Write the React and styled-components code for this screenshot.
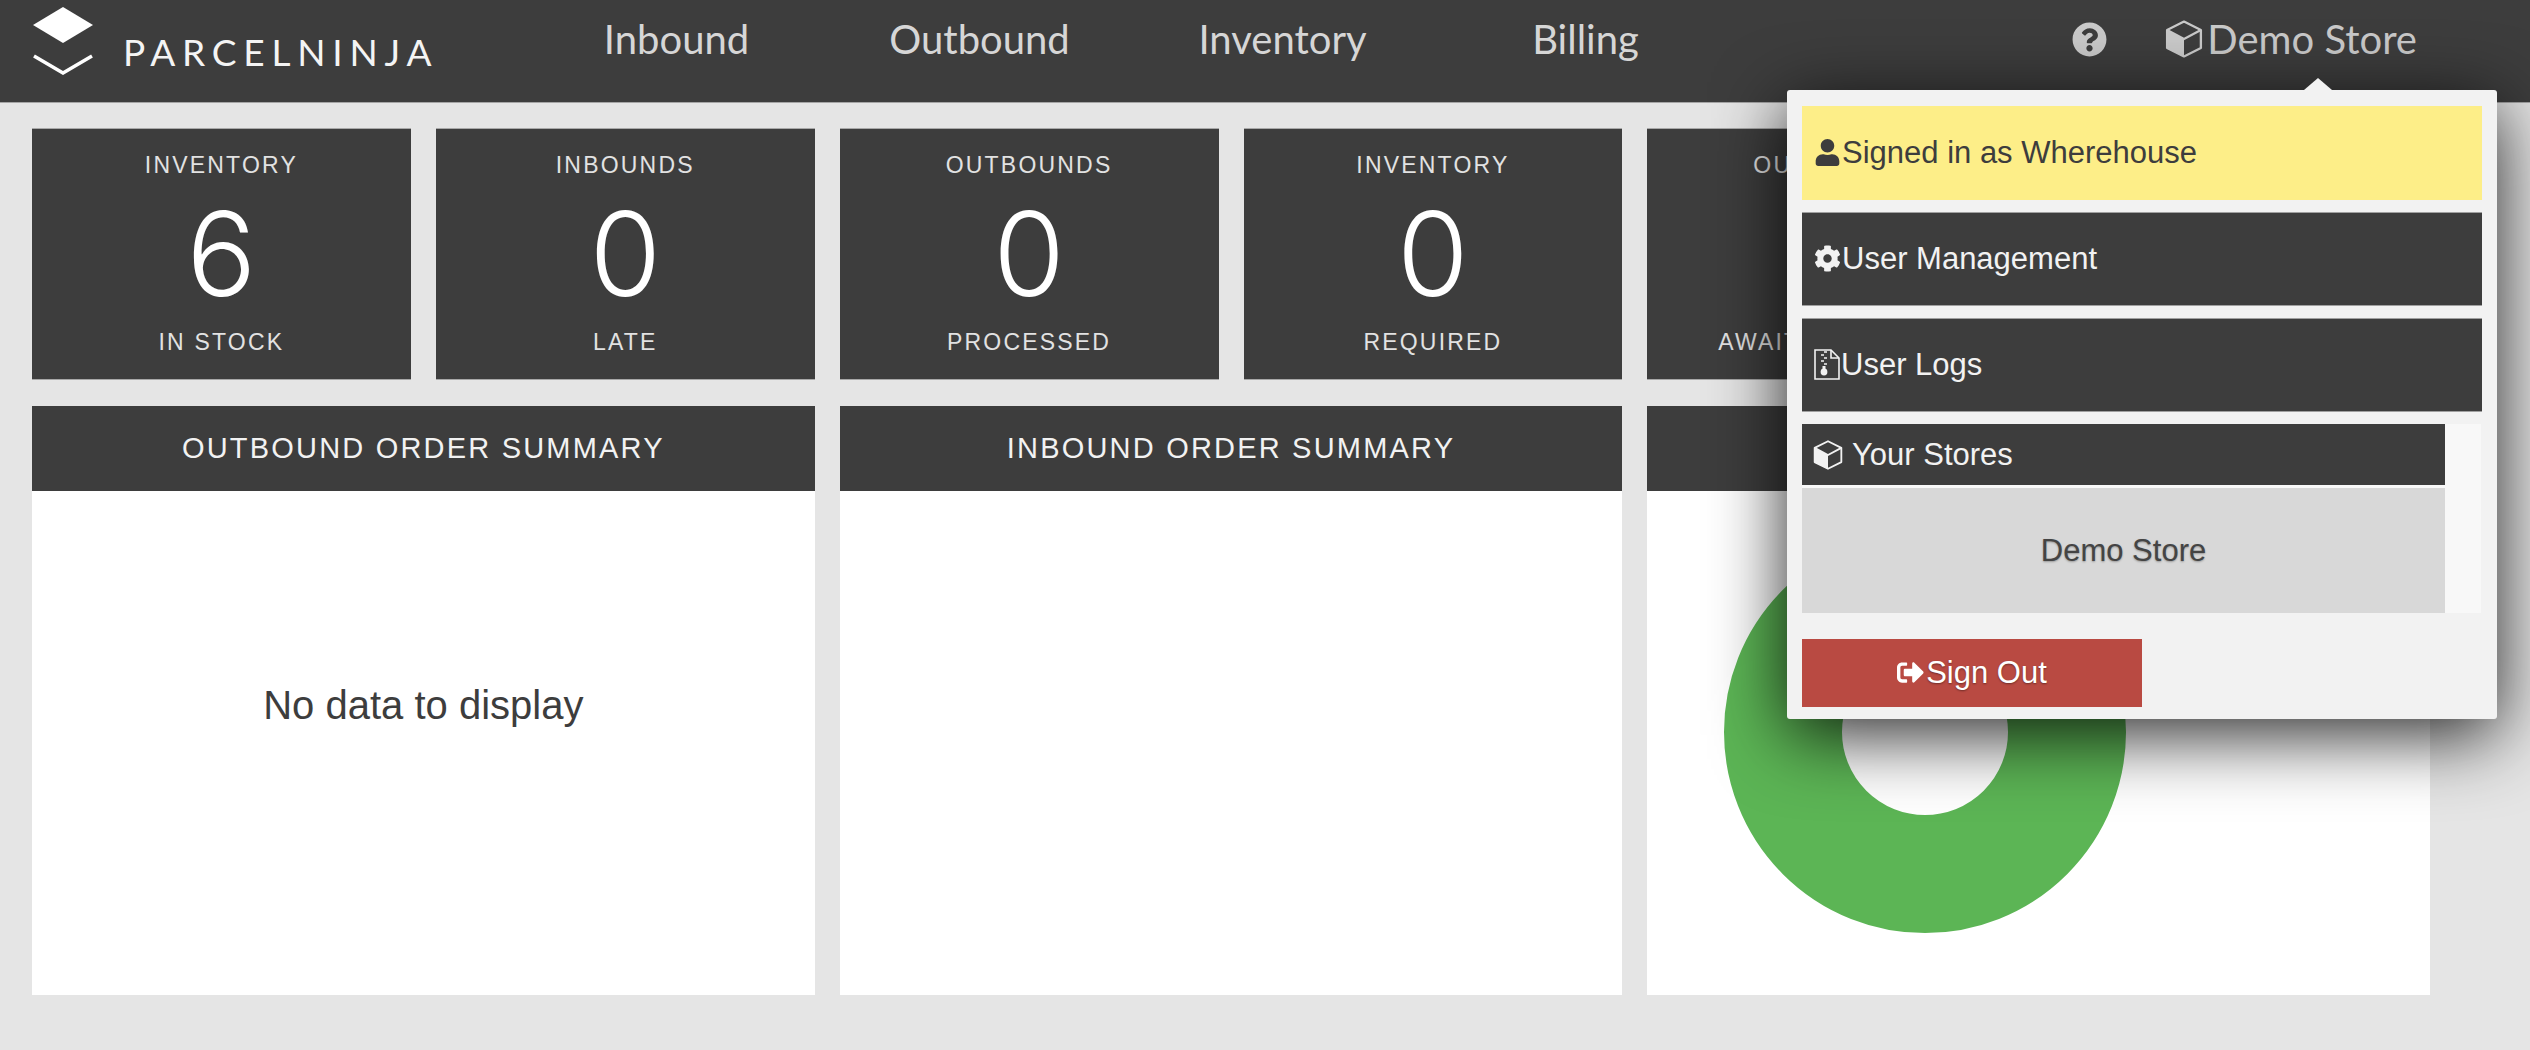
import React from 'react'
import styled, { createGlobalStyle } from 'styled-components'
import { FaUser, FaCog, FaSignOutAlt, FaQuestionCircle } from 'react-icons/fa'

const GlobalStyle = createGlobalStyle`
html, body {
    margin: 0;
    height: 100%;
    background-color: #e5e5e5;
    overflow: hidden;
    font-family: "Liberation Sans", Arial, sans-serif;
}
`;

const Page = styled.div`
position: relative;
width: 2530px;
height: 1050px;
`;

const Header = styled.header`
display: flex;
align-items: center;
height: 103px;
box-sizing: border-box;
background-color: #3d3d3d;
border-bottom: 1px solid #a5a5a5;
color: #d6d6d6;
font-family: "Lato", sans-serif;
`;

const Brand = styled.div`
display: flex;
align-items: center;
width: 525px;
padding-left: 33px;
box-sizing: border-box;
gap: 30px;
height: 100%;
padding-bottom: 20px;
`;

const LogoText = styled.span`
font-family: "Lato", sans-serif;
font-size: 37px;
line-height: 1;
letter-spacing: 6.8px;
color: #f4f4f4;
margin-top: 21px;
`;

const Nav = styled.nav`
display: flex;
flex: 1;
`;

const NavItem = styled.a`
width: 303px;
text-align: center;
font-size: 40px;
padding-bottom: 24px;
`;

const HeaderRight = styled.div`
display: flex;
align-items: center;
padding: 0 113px 24px 0;
font-size: 40px;
color: #cacaca;
svg { flex-shrink: 0; }
`;

const StoreLabel = styled.span`
display: flex;
align-items: center;
gap: 4px;
margin-left: 58px;
`;

const Board = styled.main`
display: grid;
grid-template-columns: repeat(6, 1fr);
grid-template-rows: 252px 589px;
gap: 26px 25px;
width: 2398px;
margin-left: 32px;
padding-top: 25px;
`;

const StatCard = styled.div`
display: flex;
flex-direction: column;
align-items: center;
justify-content: space-between;
padding: 23px 0 23px;
box-sizing: border-box;
background-color: #3d3d3d;
border: 1px solid #a8a8a8;
border-width: 1px 0;
color: #e2e2e2;
`;

const StatLabel = styled.div`
font-size: 23px;
line-height: 27px;
letter-spacing: 2.2px;
`;

const StatValue = styled.div`
font-family: "Inter", sans-serif;
font-weight: 300;
font-size: 116px;
line-height: 116px;
color: #fff;
`;

const Summary = styled.section`
grid-column: span 2;
display: flex;
flex-direction: column;
background-color: #fff;
`;

const SummaryTitle = styled.div`
height: 85px;
line-height: 85px;
flex-shrink: 0;
background-color: #3d3d3d;
color: #f2f2f2;
font-size: 29px;
letter-spacing: 2.2px;
text-align: center;
`;

const EmptyNote = styled.div`
flex: 1;
display: flex;
align-items: center;
justify-content: center;
padding-bottom: 76px;
font-size: 40px;
color: #3d3d3d;
`;

const ChartArea = styled.div`
flex: 1;
padding: 40px 0 0 77px;
`;

const StoreMenu = styled.div`
position: absolute;
top: 90px;
left: 1787px;
width: 710px;
height: 629px;
box-sizing: border-box;
padding: 16px 15px 0;
display: flex;
flex-direction: column;
gap: 12.5px;
background-color: #f2f2f2;
border-radius: 3px;
box-shadow: 0 16px 72px rgba(0, 0, 0, 0.85);
&::before {
    content: "";
    position: absolute;
    top: -12px;
    left: 517px;
    border-left: 14px solid transparent;
    border-right: 14px solid transparent;
    border-bottom: 12px solid #f2f2f2;
}
`;

const MenuRow = styled.div`
display: flex;
align-items: center;
gap: 1px;
height: 93.5px;
flex-shrink: 0;
box-sizing: border-box;
padding-left: 12px;
font-size: 31px;
background-color: ${props => props.$highlight ? '#fdee88' : '#3d3d3d'};
color: ${props => props.$highlight ? '#3d3d3d' : '#f2f2f2'};
border: ${props => props.$highlight ? 'none' : '1px solid #a0a0a0'};
border-width: 1px 0;
svg { flex-shrink: 0; }
`;

const StoreList = styled.div`
display: flex;
flex-direction: column;
width: 679px;
box-sizing: border-box;
padding-right: 36px;
background-color: #f8f8f8;
`;

const StoreListHead = styled.div`
display: flex;
align-items: center;
gap: 9px;
height: 61px;
padding-left: 11px;
box-sizing: border-box;
background-color: #3d3d3d;
color: #f2f2f2;
font-size: 31px;
`;

const StoreOption = styled.div`
margin-top: 3px;
height: 125px;
display: flex;
align-items: center;
justify-content: center;
background-color: #d8d8d8;
color: #444;
font-size: 31px;
text-shadow: 0 1px 2px rgba(0, 0, 0, 0.3);
`;

const SignOut = styled.button`
display: flex;
align-items: center;
justify-content: center;
gap: 2px;
width: 340px;
height: 68px;
margin-top: 13px;
padding: 0;
border: none;
background-color: #b94a42;
color: #fff;
font-family: inherit;
font-size: 31px;
text-shadow: 0 1px 2px rgba(0, 0, 0, 0.4);
`;

const Logo = () => (
    <svg width="60" height="68" viewBox="0 0 60 68">
        <polygon points="30,0 60,18 30,36 0,18" fill="#fff" />
        <polyline points="1,49 30,66 59,49" fill="none" stroke="#fff" strokeWidth="3.5" />
    </svg>
);

const Cube = ({ size, color }) => (
    <svg width={size} height={size} viewBox="0 0 36 36">
        <polygon points="2,10 18,18 18,35 2,27" fill={color} />
        <polygon points="18,1.5 34,9.5 34,26.5 18,34.5 2,26.5 2,9.5" fill="none" stroke={color} strokeWidth="2.2" strokeLinejoin="round" />
        <polyline points="2,9.5 18,18 34,9.5" fill="none" stroke={color} strokeWidth="2.2" />
    </svg>
);

const ArchiveFile = ({ color }) => (
    <svg width="26" height="31" viewBox="0 0 26 31">
        <path d="M1 1h16l8 8v21H1z" fill="none" stroke={color} strokeWidth="1.6" />
        <path d="M17 1v8h8" fill="none" stroke={color} strokeWidth="1.6" />
        <path d="M10 3h3M7 6h3M10 9h3M7 12h3M10 15h3" stroke={color} strokeWidth="1.6" />
        <circle cx="10" cy="23" r="3.4" fill={color} />
        <rect x="8.5" y="17" width="3" height="4" fill={color} />
    </svg>
);

const Donut = () => (
    <svg width="402" height="402" viewBox="0 0 402 402">
        <circle cx="201" cy="201" r="142" fill="none" stroke="#5cb555" strokeWidth="118" />
    </svg>
);

const stats = [
    { top: 'INVENTORY', value: 6, bottom: 'IN STOCK' },
    { top: 'INBOUNDS', value: 0, bottom: 'LATE' },
    { top: 'OUTBOUNDS', value: 0, bottom: 'PROCESSED' },
    { top: 'INVENTORY', value: 0, bottom: 'REQUIRED' },
    { top: 'OUTBOUNDS', value: 0, bottom: 'AWAITING PICKUP' },
];

const navItems = ['Inbound', 'Outbound', 'Inventory', 'Billing'];

const App = () => {
    return (
        <Page>
            <GlobalStyle />
            <Header>
                <Brand>
                    <Logo />
                    <LogoText>PARCELNINJA</LogoText>
                </Brand>
                <Nav>
                    {navItems.map(item => <NavItem key={item}>{item}</NavItem>)}
                </Nav>
                <HeaderRight>
                    <FaQuestionCircle size={35} />
                    <StoreLabel><Cube size={38} color="#cacaca" />Demo Store</StoreLabel>
                </HeaderRight>
            </Header>
            <Board>
                {stats.map((stat, index) => (
                    <StatCard key={index}>
                        <StatLabel>{stat.top}</StatLabel>
                        <StatValue>{stat.value}</StatValue>
                        <StatLabel>{stat.bottom}</StatLabel>
                    </StatCard>
                ))}
                <StatCard />
                <Summary>
                    <SummaryTitle>OUTBOUND ORDER SUMMARY</SummaryTitle>
                    <EmptyNote>No data to display</EmptyNote>
                </Summary>
                <Summary>
                    <SummaryTitle>INBOUND ORDER SUMMARY</SummaryTitle>
                </Summary>
                <Summary>
                    <SummaryTitle />
                    <ChartArea><Donut /></ChartArea>
                </Summary>
            </Board>
            <StoreMenu>
                <MenuRow $highlight><FaUser size={27} />Signed in as Wherehouse</MenuRow>
                <MenuRow><FaCog size={27} />User Management</MenuRow>
                <MenuRow><ArchiveFile color="#f2f2f2" />User Logs</MenuRow>
                <StoreList>
                    <StoreListHead><Cube size={30} color="#f2f2f2" />Your Stores</StoreListHead>
                    <StoreOption>Demo Store</StoreOption>
                </StoreList>
                <SignOut><FaSignOutAlt size={27} />Sign Out</SignOut>
            </StoreMenu>
        </Page>
    )
}

export default App
